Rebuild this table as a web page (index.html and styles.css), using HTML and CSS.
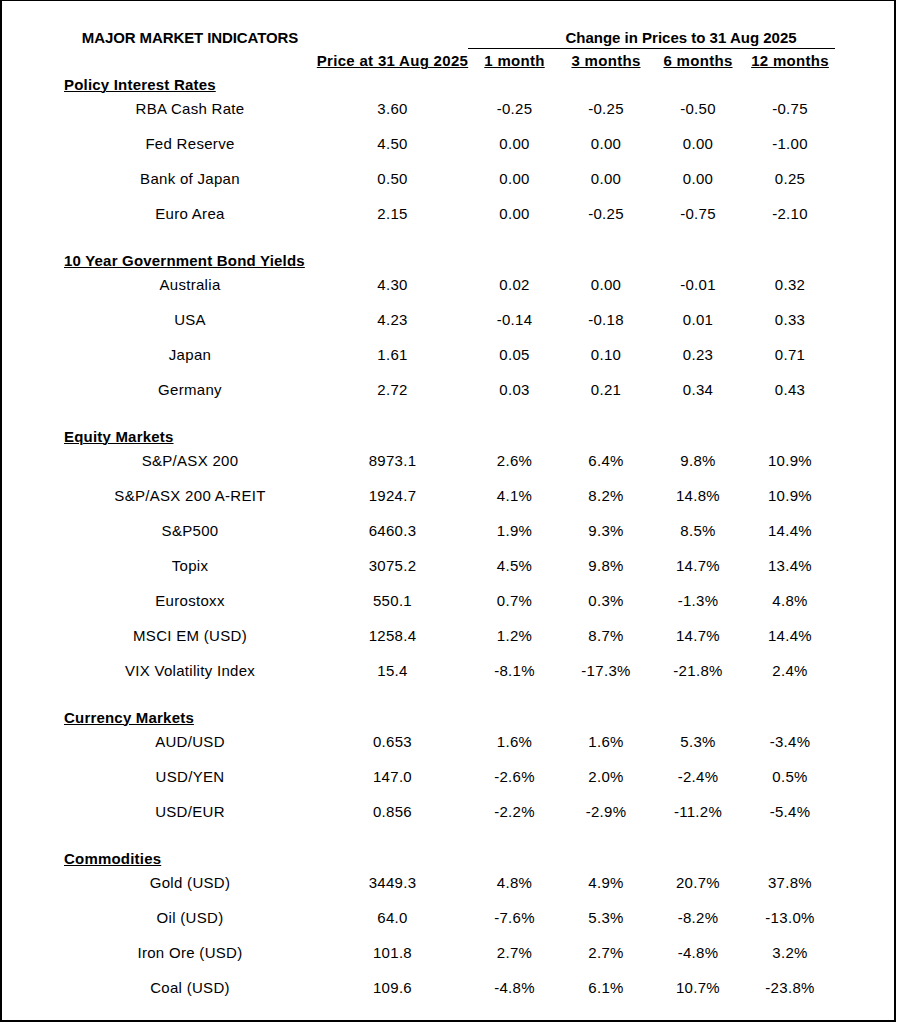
FILE: index.html
```html
<!DOCTYPE html>
<html lang="en">
<head>
<meta charset="utf-8">
<title>Major Market Indicators</title>
<link rel="stylesheet" href="styles.css">
</head>
<body>
<div class="sheet">
  <div class="grid title-row">
    <div class="title">MAJOR MARKET INDICATORS</div>
    <div></div>
    <div class="change">Change in Prices to 31 Aug 2025</div>
  </div>
  <div class="grid head-row">
    <div></div>
    <div class="ch">Price at 31 Aug 2025</div>
    <div class="ch">1 month</div>
    <div class="ch">3 months</div>
    <div class="ch">6 months</div>
    <div class="ch">12 months</div>
  </div>

  <section class="group">
    <h2 class="gh">Policy Interest Rates</h2>
    <div class="grid row"><div>RBA Cash Rate</div><div>3.60</div><div>-0.25</div><div>-0.25</div><div>-0.50</div><div>-0.75</div></div>
    <div class="grid row"><div>Fed Reserve</div><div>4.50</div><div>0.00</div><div>0.00</div><div>0.00</div><div>-1.00</div></div>
    <div class="grid row"><div>Bank of Japan</div><div>0.50</div><div>0.00</div><div>0.00</div><div>0.00</div><div>0.25</div></div>
    <div class="grid row"><div>Euro Area</div><div>2.15</div><div>0.00</div><div>-0.25</div><div>-0.75</div><div>-2.10</div></div>
  </section>

  <section class="group">
    <h2 class="gh">10 Year Government Bond Yields</h2>
    <div class="grid row"><div>Australia</div><div>4.30</div><div>0.02</div><div>0.00</div><div>-0.01</div><div>0.32</div></div>
    <div class="grid row"><div>USA</div><div>4.23</div><div>-0.14</div><div>-0.18</div><div>0.01</div><div>0.33</div></div>
    <div class="grid row"><div>Japan</div><div>1.61</div><div>0.05</div><div>0.10</div><div>0.23</div><div>0.71</div></div>
    <div class="grid row"><div>Germany</div><div>2.72</div><div>0.03</div><div>0.21</div><div>0.34</div><div>0.43</div></div>
  </section>

  <section class="group">
    <h2 class="gh">Equity Markets</h2>
    <div class="grid row"><div>S&amp;P/ASX 200</div><div>8973.1</div><div>2.6%</div><div>6.4%</div><div>9.8%</div><div>10.9%</div></div>
    <div class="grid row"><div>S&amp;P/ASX 200 A-REIT</div><div>1924.7</div><div>4.1%</div><div>8.2%</div><div>14.8%</div><div>10.9%</div></div>
    <div class="grid row"><div>S&amp;P500</div><div>6460.3</div><div>1.9%</div><div>9.3%</div><div>8.5%</div><div>14.4%</div></div>
    <div class="grid row"><div>Topix</div><div>3075.2</div><div>4.5%</div><div>9.8%</div><div>14.7%</div><div>13.4%</div></div>
    <div class="grid row"><div>Eurostoxx</div><div>550.1</div><div>0.7%</div><div>0.3%</div><div>-1.3%</div><div>4.8%</div></div>
    <div class="grid row"><div>MSCI EM (USD)</div><div>1258.4</div><div>1.2%</div><div>8.7%</div><div>14.7%</div><div>14.4%</div></div>
    <div class="grid row"><div>VIX Volatility Index</div><div>15.4</div><div>-8.1%</div><div>-17.3%</div><div>-21.8%</div><div>2.4%</div></div>
  </section>

  <section class="group">
    <h2 class="gh">Currency Markets</h2>
    <div class="grid row"><div>AUD/USD</div><div>0.653</div><div>1.6%</div><div>1.6%</div><div>5.3%</div><div>-3.4%</div></div>
    <div class="grid row"><div>USD/YEN</div><div>147.0</div><div>-2.6%</div><div>2.0%</div><div>-2.4%</div><div>0.5%</div></div>
    <div class="grid row"><div>USD/EUR</div><div>0.856</div><div>-2.2%</div><div>-2.9%</div><div>-11.2%</div><div>-5.4%</div></div>
  </section>

  <section class="group">
    <h2 class="gh">Commodities</h2>
    <div class="grid row"><div>Gold (USD)</div><div>3449.3</div><div>4.8%</div><div>4.9%</div><div>20.7%</div><div>37.8%</div></div>
    <div class="grid row"><div>Oil (USD)</div><div>64.0</div><div>-7.6%</div><div>5.3%</div><div>-8.2%</div><div>-13.0%</div></div>
    <div class="grid row"><div>Iron Ore (USD)</div><div>101.8</div><div>2.7%</div><div>2.7%</div><div>-4.8%</div><div>3.2%</div></div>
    <div class="grid row"><div>Coal (USD)</div><div>109.6</div><div>-4.8%</div><div>6.1%</div><div>10.7%</div><div>-23.8%</div></div>
  </section>
</div>
</body>
</html>
```

FILE: styles.css
```css
html, body {
  margin: 0;
  padding: 0;
  background: #fff;
}

body {
  font-family: "Liberation Sans", Arial, sans-serif;
  font-size: 15px;
  color: #000;
}

.sheet {
  box-sizing: border-box;
  width: 896px;
  height: 1022px;
  border: 2px solid #000;
  border-top-width: 1px;
  padding: 27px 0 0 62px;
}

.grid {
  display: grid;
  grid-template-columns: 252px 153px 91px 92px 92px 92px;
  line-height: 20px;
  text-align: center;
}

.title,
.change,
.ch,
.gh {
  font-weight: 700;
}

.title {
  letter-spacing: -0.1px;
}

.change {
  grid-column: 3 / span 4;
  border-bottom: 1px solid #000;
  margin-left: -1px;
  margin-right: 1px;
  padding-left: 59px;
}

.head-row {
  margin-top: 2px;
}

.ch {
  letter-spacing: 0.3px;
}

.ch,
.gh {
  text-decoration: underline;
  text-decoration-thickness: 1px;
}

.group {
  margin-top: 16px;
}

.group:first-of-type {
  margin-top: 4px;
}

.gh {
  margin: 0;
  font-size: 15px;
  line-height: 20px;
  text-align: left;
  letter-spacing: 0.2px;
}

.row {
  height: 35px;
  box-sizing: border-box;
  padding: 4px 0 11px;
  letter-spacing: 0.3px;
}
```
